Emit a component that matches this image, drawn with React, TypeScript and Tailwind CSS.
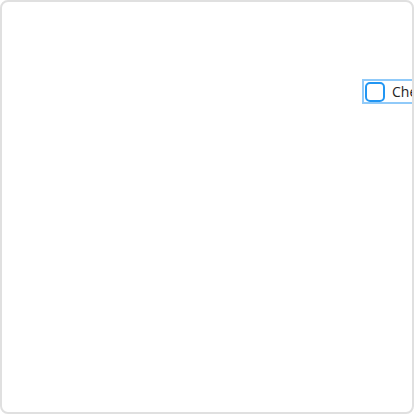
import React from "react";

export default function App() {
  return (
    <div className="w-[416px] h-[416px] bg-white">
      <div className="w-[414px] h-[414px] border-2 border-[#e0e0e0] rounded-[8px] overflow-hidden bg-white">
        <div className="pt-[77px] pl-[360px]">
          <label
            className="flex items-center h-[25px] w-[160px] border-2 border-[#90caf9] pl-[1px] gap-[7px] whitespace-nowrap text-[14px] text-[#222]"
            style={{ fontFamily: "'Open Sans', Inter, sans-serif" }}
          >
            <span className="w-[20px] h-[20px] shrink-0 rounded-[5px] border-2 border-[#2196f3] bg-white" />
            <span>Checkbox</span>
          </label>
        </div>
      </div>
    </div>
  );
}
